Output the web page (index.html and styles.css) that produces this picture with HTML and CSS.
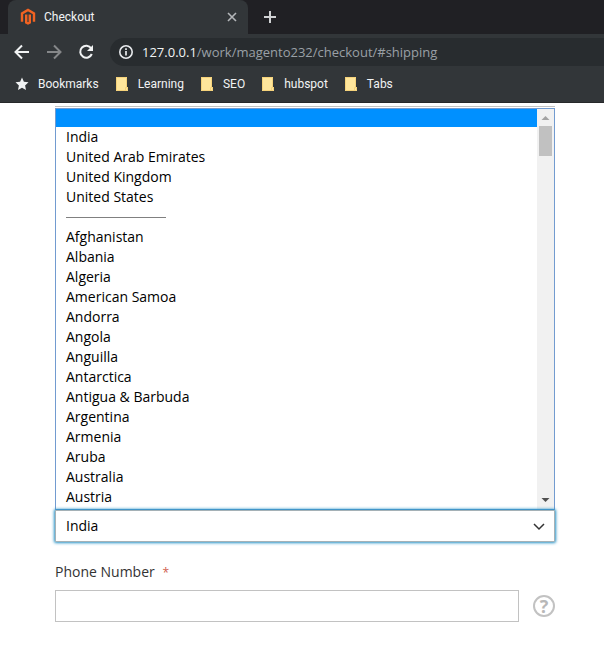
FILE: index.html
```html
<!DOCTYPE html>
<html lang="en">
<head>
<meta charset="utf-8">
<title>Checkout</title>
<link rel="stylesheet" href="styles.css">
</head>
<body>
<header class="browser">
  <div class="tab-strip">
    <div class="tab">
      <svg class="favicon" width="16" height="18" viewBox="0 0 16 18" fill="none" stroke="#f26322" stroke-width="2.4"><path d="M2 13.800V5.400L8 2l6 3.400v8.400M6.200 6.500v8L8 15.500l1.800-1v-8"/></svg>
      <span class="tab-title">Checkout</span>
      <button class="icon-button" aria-label="Close tab"><svg width="10" height="10" viewBox="0 0 10 10" stroke="#b4b7ba" stroke-width="1.6"><path d="M1 1l8 8M9 1L1 9"/></svg></button>
    </div>
    <button class="icon-button new-tab" aria-label="New tab"><svg width="14" height="14" viewBox="0 0 14 14" stroke="#d0d2d4" stroke-width="2"><path d="M7 1v12M1 7h12"/></svg></button>
  </div>
  <div class="toolbar">
    <button class="icon-button" aria-label="Back"><svg width="16" height="16" viewBox="0 0 16 16" fill="none" stroke="#f1f3f4" stroke-width="2"><path d="M15 8H2M8 1.5L1.5 8 8 14.5"/></svg></button>
    <button class="icon-button" aria-label="Forward"><svg width="16" height="16" viewBox="0 0 16 16" fill="none" stroke="#858789" stroke-width="2"><path d="M1 8h13M8 1.5L14.500 8 8 14.500"/></svg></button>
    <button class="icon-button" aria-label="Reload"><svg width="16" height="16" viewBox="0 0 16 16" fill="none" stroke="#f1f3f4" stroke-width="2"><path d="M13.200 4.300A6 6 0 1 0 13.800 10"/><path d="M15 1v6H9z" fill="#f1f3f4" stroke="none"/></svg></button>
    <div class="address">
      <svg width="16" height="16" viewBox="0 0 16 16" fill="none" stroke="#e8eaed"><circle cx="8" cy="8" r="6.200" stroke-width="1.600"/><path d="M8 7v4.500M8 4.300v1.700" stroke-width="1.700"/></svg>
      <span class="url"><span class="host">127.0.0.1</span>/work/magento232/checkout/#shipping</span>
    </div>
  </div>
  <nav class="bookmarks">
    <a href="#bookmarks"><svg width="14" height="14" viewBox="0 0 14 14" fill="#f1f3f4"><path d="M7 .5l1.900 4.300 4.600.5-3.400 3.100.9 4.600L7 10.700 3 13l.9-4.600L.5 5.300l4.600-.5z"/></svg>Bookmarks</a>
    <a href="#learning"><svg width="13" height="14" viewBox="0 0 13 14"><path d="M0 0h11v10h1v4H0z" fill="#ffe69b"/><path d="M.5 0v13.500h11V10.500h-2V13M0 .5h10.500V10" fill="none" stroke="#f5d27a"/></svg>Learning</a>
    <a href="#seo"><svg width="13" height="14" viewBox="0 0 13 14"><path d="M0 0h11v10h1v4H0z" fill="#ffe69b"/><path d="M.5 0v13.500h11V10.500h-2V13M0 .5h10.500V10" fill="none" stroke="#f5d27a"/></svg>SEO</a>
    <a href="#hubspot"><svg width="13" height="14" viewBox="0 0 13 14"><path d="M0 0h11v10h1v4H0z" fill="#ffe69b"/><path d="M.5 0v13.500h11V10.500h-2V13M0 .5h10.500V10" fill="none" stroke="#f5d27a"/></svg>hubspot</a>
    <a href="#tabs"><svg width="13" height="14" viewBox="0 0 13 14"><path d="M0 0h11v10h1v4H0z" fill="#ffe69b"/><path d="M.5 0v13.500h11V10.500h-2V13M0 .5h10.500V10" fill="none" stroke="#f5d27a"/></svg>Tabs</a>
  </nav>
</header>
<main class="checkout">
  <div class="previous-field"></div>
  <div class="dropdown">
    <ul class="options" role="listbox" aria-label="Countries">
      <li class="empty" role="option" aria-selected="true"></li>
      <li role="option">India</li>
      <li role="option">United Arab Emirates</li>
      <li role="option">United Kingdom</li>
      <li role="option">United States</li>
      <li class="separator" role="separator"></li>
      <li role="option">Afghanistan</li>
      <li role="option">Albania</li>
      <li role="option">Algeria</li>
      <li role="option">American Samoa</li>
      <li role="option">Andorra</li>
      <li role="option">Angola</li>
      <li role="option">Anguilla</li>
      <li role="option">Antarctica</li>
      <li role="option">Antigua &amp; Barbuda</li>
      <li role="option">Argentina</li>
      <li role="option">Armenia</li>
      <li role="option">Aruba</li>
      <li role="option">Australia</li>
      <li role="option">Austria</li>
    </ul>
    <div class="scrollbar">
      <svg width="17" height="17" viewBox="0 0 17 17" fill="#a3a3a3"><path d="M4.500 11L8.500 7l4 4z"/></svg>
      <div class="thumb"></div>
      <svg width="17" height="17" viewBox="0 0 17 17" fill="#505050"><path d="M4.500 6h8l-4 4z"/></svg>
    </div>
  </div>
  <div class="country">
    <select aria-label="Country"><option>India</option></select>
    <svg class="chevron" width="12" height="8" viewBox="0 0 12 8" fill="none" stroke="#333" stroke-width="1.500"><path d="M1 1l5 5 5-5"/></svg>
  </div>
  <label class="label" for="phone">Phone Number <span class="required">*</span></label>
  <div class="phone-row">
    <input id="phone" type="tel">
    <button class="icon-button help" aria-label="Help">?</button>
  </div>
</main>
</body>
</html>
```
FILE: styles.css
```css
* {
  box-sizing: border-box;
}

body {
  margin: 0;
  background: #fff;
  color: #333;
  font: 14px/20px "Open Sans", sans-serif;
}

svg {
  display: block;
  flex: none;
}

.icon-button {
  display: flex;
  align-items: center;
  justify-content: center;
  flex: none;
  padding: 0;
  border: 0;
  background: none;
}

.browser {
  background: #323639;
  border-bottom: 1px solid #26282a;
  color: #f1f3f4;
  font-family: Roboto, sans-serif;
}

.tab-strip {
  display: flex;
  height: 34px;
  padding-left: 8px;
  background: #202024;
}

.tab {
  display: flex;
  align-items: center;
  gap: 8px;
  width: 240px;
  padding: 0 11px 0 12px;
  border-radius: 8px 8px 0 0;
  background: #323639;
  font-size: 12px;
}

.tab-title {
  flex: 1;
}

.new-tab {
  width: 44px;
}

.toolbar {
  display: flex;
  align-items: center;
  gap: 16px;
  height: 36px;
  padding-left: 14px;
}

.address {
  display: flex;
  flex: 1;
  align-items: center;
  gap: 8px;
  height: 28px;
  padding-left: 8px;
  border-radius: 14px 0 0 14px;
  background: #282c2f;
}

.url {
  color: #9aa0a6;
  font-family: "Open Sans", sans-serif;
  font-size: 13px;
}

.host {
  color: #f1f3f4;
}

.bookmarks {
  display: flex;
  gap: 17px;
  height: 32px;
  padding: 4px 15px 8px;
  font-size: 12px;
}

.bookmarks a {
  display: flex;
  align-items: center;
  gap: 9px;
  color: inherit;
  text-decoration: none;
}

.checkout {
  padding: 3px 49px 30px 55px;
}

.previous-field {
  height: 2px;
  border-top: 1px solid #c2c2c2;
}

.dropdown {
  display: flex;
  border: 1px solid #729bd0;
  background: #fff;
  color: #000;
}

.options {
  flex: 1;
  margin: 0;
  padding: 0 0 2px;
  list-style: none;
}

.options li {
  height: 20px;
  padding-left: 10px;
}

.options .empty {
  height: 18px;
  background: #0090ff;
}

.options .separator {
  display: flex;
  align-items: center;
}

.separator::before {
  content: "";
  width: 100px;
  border-top: 1px solid #808080;
}

.scrollbar {
  display: flex;
  flex-direction: column;
  width: 17px;
  background: #f1f1f1;
}

.thumb {
  height: 30px;
  margin: 0 2px auto;
  background: #c1c1c1;
}

.country {
  position: relative;
}

.country select {
  display: block;
  width: 100%;
  height: 32px;
  padding: 0 10px;
  border: 1px solid #a5b1b6;
  border-radius: 1px;
  outline: 0;
  appearance: none;
  background: #fff;
  box-shadow: 0 0 3px 1px #2692c6;
  color: #000;
  font: inherit;
}

.chevron {
  position: absolute;
  top: 13px;
  right: 10px;
  pointer-events: none;
}

.label {
  display: block;
  margin: 20px 0 8px;
}

.required {
  margin-left: 4px;
  color: #d0604e;
  font-size: 12px;
  line-height: 1;
}

.phone-row {
  display: flex;
  align-items: center;
  gap: 14px;
}

.phone-row input {
  flex: 1;
  min-width: 0;
  height: 32px;
  padding: 0 9px;
  border: 1px solid #c2c2c2;
  background: #fff;
  font: inherit;
}

.help {
  width: 22px;
  height: 22px;
  border: 2px solid #c2c2c2;
  border-radius: 50%;
  color: #b8b8b8;
  font: bold 18px/18px "Open Sans", sans-serif;
}
```
